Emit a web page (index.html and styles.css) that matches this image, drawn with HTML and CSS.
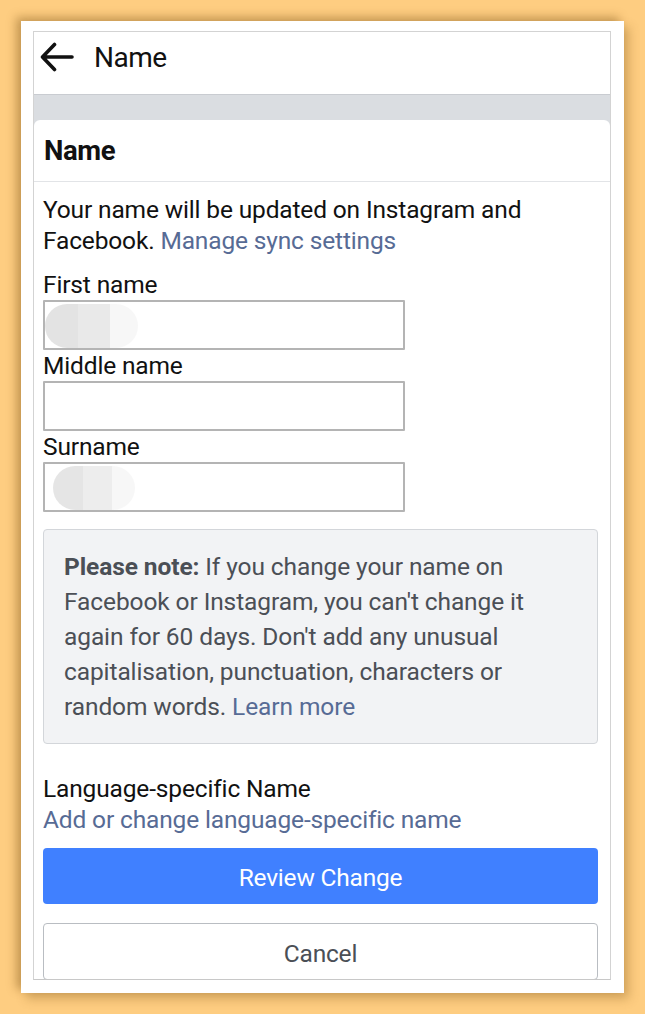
FILE: index.html
```html
<!DOCTYPE html>
<html lang="en">
<head>
    <meta charset="UTF-8">
    <meta name="viewport" content="width=device-width, initial-scale=1.0">
    <title>Name</title>
    <link rel="stylesheet" href="styles.css">
</head>
<body>
    <div class="frame">
        <div class="screen">
            <div class="topbar">
                <svg class="back" width="36" height="30" viewBox="0 0 36 30">
                    <path d="M33 15H4M15.5 2.5L3.5 15L15.5 27.5" fill="none" stroke="#111" stroke-width="3.6" stroke-linecap="round" stroke-linejoin="round"/>
                </svg>
                <span class="topbar-title">Name</span>
            </div>
            <div class="band"></div>

            <div class="card">
                <div class="card-head">Name</div>
                <div class="card-body">
                    <p class="intro">Your name will be updated on Instagram and Facebook. <a href="#">Manage sync settings</a></p>

                    <label class="field-label">First name</label>
                    <div class="field"><span class="blur blur-first"></span></div>
                    <label class="field-label">Middle name</label>
                    <div class="field"></div>
                    <label class="field-label">Surname</label>
                    <div class="field"><span class="blur blur-last"></span></div>

                    <div class="note">
                        <b>Please note:</b> If you change your name on Facebook or Instagram, you can't change it again for 60 days. Don't add any unusual capitalisation, punctuation, characters or random words. <a href="#">Learn more</a>
                    </div>

                    <div class="lang">
                        <div>Language-specific Name</div>
                        <a href="#">Add or change language-specific name</a>
                    </div>

                    <button class="btn btn-primary">Review Change</button>
                    <button class="btn btn-cancel">Cancel</button>
                </div>
            </div>
        </div>
    </div>
</body>
</html>
```

FILE: styles.css
```css
/* General Styles */
* {
    margin: 0;
    padding: 0;
    box-sizing: border-box;
    font-family: Roboto, "Noto Sans", Arial, sans-serif;
}

body {
    background-color: #fecd81;
    height: 1014px;
    overflow: hidden;
}

.frame {
    margin: 21px 0 0 21px;
    width: 603px;
    height: 972px;
    background-color: white;
    padding: 10px 13px 0 12px;
    box-shadow: -5px -4px 9px rgba(120, 80, 20, 0.4), 5px 6px 10px rgba(120, 80, 20, 0.3);
}

.screen {
    width: 578px;
    height: 949px;
    border: 1px solid #d3d3d3;
    border-bottom-color: #c8c8c8;
    background-color: #dadde1;
    overflow: hidden;
}

/* Top bar */
.topbar {
    height: 63px;
    background-color: white;
    border-bottom: 1px solid #c9ccd1;
    display: flex;
    align-items: center;
    padding: 0 0 12px 5px;
}

.back {
    display: block;
}

.topbar-title {
    margin-left: 19px;
    font-size: 28px;
    color: #111;
    letter-spacing: -0.5px;
}

.band {
    height: 25px;
}

/* Card */
.card {
    background-color: white;
    border-radius: 6px 6px 0 0;
    height: 900px;
}

.card-head {
    height: 62px;
    border-bottom: 1px solid #e2e4e7;
    padding-left: 10px;
    display: flex;
    align-items: center;
    font-size: 27.5px;
    font-weight: bold;
    color: #111;
    letter-spacing: -0.4px;
}

.card-body {
    padding: 12px 13px 0 9px;
    font-size: 24.5px;
    color: #111;
    letter-spacing: -0.15px;
}

a {
    color: #576b95;
    text-decoration: none;
}

.intro {
    line-height: 31px;
    margin-bottom: 13px;
}

.field-label {
    display: block;
    line-height: 31px;
}

.field {
    position: relative;
    width: 362px;
    height: 50px;
    border: 2px solid #b4b4b4;
    border-radius: 1px;
    overflow: hidden;
}

/* pixelated blur over the names */
.blur {
    position: absolute;
    top: 2px;
    height: 44px;
    border-radius: 22px;
    background: linear-gradient(90deg, #e3e3e3 0 36%, #e9e9e9 36% 70%, #f7f7f7 70%);
}

.blur-first {
    left: 0;
    width: 93px;
}

.blur-last {
    left: 8px;
    width: 82px;
    background: linear-gradient(90deg, #e5e5e5 0 36%, #ededed 36% 72%, #f7f7f7 72%);
}

.note {
    margin-top: 17px;
    width: 555px;
    background-color: #f2f3f5;
    border: 1px solid #d3d6da;
    border-radius: 4px;
    padding: 19px 20px 19px 20px;
    line-height: 35px;
    color: #4b4f56;
    font-size: 24.5px;
    letter-spacing: -0.1px;
}

.note b {
    font-weight: bold;
}

.lang {
    margin-top: 29px;
    line-height: 31px;
}

.lang a {
    display: block;
}

.btn {
    display: block;
    width: 555px;
    font-size: 24.5px;
    border-radius: 4px;
    letter-spacing: -0.2px;
    padding-top: 3px;
}

.btn-primary {
    margin-top: 13px;
    height: 56px;
    background-color: #4080ff;
    color: white;
    border: none;
}

.btn-cancel {
    margin-top: 19px;
    height: 57px;
    background-color: white;
    color: #4b4f56;
    border: 1.5px solid #b9bdc2;
}
```
